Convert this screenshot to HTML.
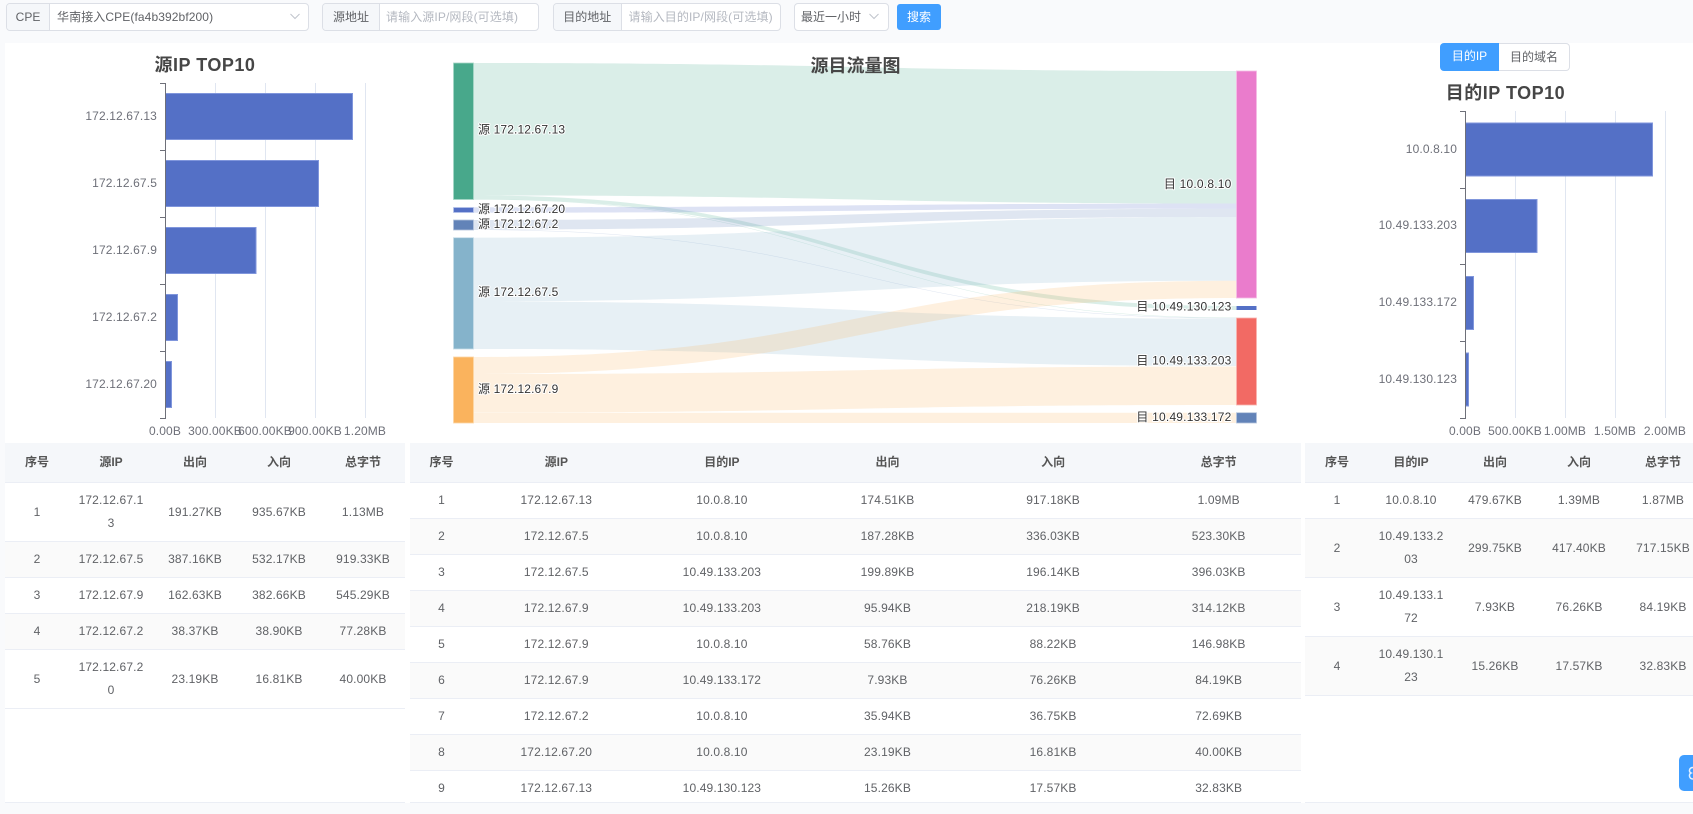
<!DOCTYPE html>
<html lang="zh-CN">
<head>
<meta charset="utf-8">
<title>源目流量</title>
<style>
html,body{margin:0;padding:0;width:1693px;height:814px;overflow:hidden;background:#f9fafc;font-family:"Liberation Sans","Noto Sans CJK SC",sans-serif;font-size:12px;color:#606266}
*{box-sizing:border-box}
.abs{position:absolute}
#panel{left:5px;top:43px;width:1688px;height:760px;background:#fff}
.box{position:absolute;top:3px;height:28px;border:1px solid #dcdfe6;border-radius:4px;background:#fff;line-height:26px;white-space:nowrap;overflow:hidden}
.pre{position:absolute;left:0;top:0;height:26px;background:#f5f7fa;border-right:1px solid #dcdfe6;text-align:center}
.ph{position:absolute;top:0;color:#b4b8c0;letter-spacing:.1px}
.tb{position:absolute;top:443px;height:360px;overflow:hidden;border-bottom:1px solid #ebeef5;background:#fff}
.r{display:flex;height:36px;border-bottom:1px solid #ebeef5;align-items:center;text-align:center;line-height:23px;letter-spacing:.13px}
.r>div{flex:none;width:84px}
.r>div:first-child{width:64px}
.m .r>div{width:165.6px}
.m .r>div:first-child{width:64px}
.h{height:40px;background:#f5f7fa;font-weight:bold;color:#555;letter-spacing:0}
.t{height:59px}
.a{background:#fafafa}
</style>
</head>
<body>
<div class="abs" id="panel"></div>

<div class="box" style="left:6px;width:303px">
  <div class="pre" style="width:43px">CPE</div>
  <div class="ph" style="left:50px;color:#606266">华南接入CPE(fa4b392bf200)</div>
  <svg class="abs" style="left:282px;top:9px" width="12" height="8"><polyline points="1.5,1 6,5.5 10.5,1" fill="none" stroke="#c0c4cc" stroke-width="1"/></svg>
</div>
<div class="box" style="left:322px;width:217px">
  <div class="pre" style="width:57px">源地址</div>
  <div class="ph" style="left:63px">请输入源IP/网段(可选填)</div>
</div>
<div class="box" style="left:552.5px;width:228.5px">
  <div class="pre" style="width:68.5px">目的地址</div>
  <div class="ph" style="left:75px">请输入目的IP/网段(可选填)</div>
</div>
<div class="box" style="left:793.5px;width:95.5px">
  <div class="ph" style="left:6.5px;color:#606266;letter-spacing:0">最近一小时</div>
  <svg class="abs" style="left:73.5px;top:9px" width="12" height="8"><polyline points="1.5,1 6,5.5 10.5,1" fill="none" stroke="#c0c4cc" stroke-width="1"/></svg>
</div>
<div class="abs" style="left:897px;top:4px;width:44px;height:26px;background:#409eff;border-radius:3px;color:#fff;text-align:center;line-height:26px">搜索</div>

<div class="abs" style="left:1440px;top:43px;width:59px;height:28px;background:#409eff;border-radius:4px 0 0 4px;color:#fff;text-align:center;line-height:27px">目的IP</div>
<div class="abs" style="left:1499px;top:43px;width:71px;height:28px;background:#fff;border:1px solid #dcdfe6;border-left:0;border-radius:0 4px 4px 0;text-align:center;line-height:26px">目的域名</div>

<svg class="abs" style="left:0;top:0" width="1693" height="443" viewBox="0 0 1693 443" font-family="'Liberation Sans','Noto Sans CJK SC',sans-serif" font-size="12" letter-spacing=".13">
  <!-- grid -->
  <g stroke="#e0e6f1" stroke-width="1">
    <path d="M215.5 83V418M265.5 83V418M315.5 83V418M365.5 83V418M1515.5 111V418M1565.5 111V418M1615.5 111V418M1665.5 111V418"/>
  </g>
  <g fill="#5470c6" stroke="#8096dc" stroke-width="1">
    <rect x="165.5" y="93.5" width="187" height="46"/>
    <rect x="165.5" y="160.5" width="153" height="46"/>
    <rect x="165.5" y="227.5" width="90.5" height="46"/>
    <rect x="165.5" y="294.5" width="12" height="46"/>
    <rect x="165.5" y="361.5" width="6" height="46"/>
    <rect x="1465.5" y="123" width="187" height="53"/>
    <rect x="1465.5" y="199.5" width="71.5" height="53"/>
    <rect x="1465.5" y="276.5" width="8" height="53"/>
    <rect x="1465.5" y="353" width="3" height="53"/>
  </g>
  <path d="M160 83.5H165.5M160 150.5H165.5M160 217.5H165.5M160 284.5H165.5M160 351.5H165.5M160 418.5H165.5M165.5 83V419M1460 111.5H1465.5M1460 188.5H1465.5M1460 264.5H1465.5M1460 341.5H1465.5M1460 418.5H1465.5M1465.5 111V419" stroke="#6e7079" fill="none"/>
  <g fill="#6e7079" text-anchor="end">
    <text x="157" y="120">172.12.67.13</text>
    <text x="157" y="187">172.12.67.5</text>
    <text x="157" y="254">172.12.67.9</text>
    <text x="157" y="321">172.12.67.2</text>
    <text x="157" y="388">172.12.67.20</text>
    <text x="1457" y="153">10.0.8.10</text>
    <text x="1457" y="229">10.49.133.203</text>
    <text x="1457" y="306">10.49.133.172</text>
    <text x="1457" y="383">10.49.130.123</text>
  </g>
  <g fill="#6e7079" text-anchor="middle">
    <text x="165" y="435">0.00B</text>
    <text x="215" y="435">300.00KB</text>
    <text x="265" y="435">600.00KB</text>
    <text x="315" y="435">900.00KB</text>
    <text x="365" y="435">1.20MB</text>
    <text x="1465" y="435">0.00B</text>
    <text x="1515" y="435">500.00KB</text>
    <text x="1565" y="435">1.00MB</text>
    <text x="1615" y="435">1.50MB</text>
    <text x="1665" y="435">2.00MB</text>
  </g>
  <g font-size="18" font-weight="bold" fill="#464646" text-anchor="middle" letter-spacing=".5">
    <text x="205" y="71">源IP TOP10</text>
    <text x="1505.5" y="99">目的IP TOP10</text>
  </g>

  <!-- sankey links -->
  <g fill-opacity=".2">
    <path fill="#48a88b" d="M473.7 63C855 63 855 71 1236.3 71L1236.3 203.5C855 203.5 855 195.5 473.7 195.5Z"/>
    <path fill="#48a88b" d="M473.7 195.5C855 195.5 855 306 1236.3 306L1236.3 310C855 310 855 199.2 473.7 199.2Z"/>
    <path fill="#48a88b" d="M473.7 199C855 199 855 317.5 1236.3 317.5L1236.3 318C855 318 855 199.5 473.7 199.5Z"/>
    <path fill="#5470c6" d="M473.7 207.3C855 207.3 855 203.5 1236.3 203.5L1236.3 208.7C855 208.7 855 212.7 473.7 212.7Z"/>
    <path fill="#6080b8" d="M473.7 220C855 220 855 208.7 1236.3 208.7L1236.3 217C855 217 855 229.5 473.7 229.5Z"/>
    <path fill="#6080b8" d="M473.7 229.5C855 229.5 855 318 1236.3 318L1236.3 318.5C855 318.5 855 230 473.7 230Z"/>
    <path fill="#85b3cb" d="M473.7 237.7C855 237.7 855 217 1236.3 217L1236.3 280.7C855 280.7 855 301.4 473.7 301.4Z"/>
    <path fill="#85b3cb" d="M473.7 301.4C855 301.4 855 318.7 1236.3 318.7L1236.3 366C855 366 855 349 473.7 349Z"/>
    <path fill="#fab35d" d="M473.7 357C855 357 855 280.7 1236.3 280.7L1236.3 298C855 298 855 374 473.7 374Z"/>
    <path fill="#fab35d" d="M473.7 374C855 374 855 366.5 1236.3 366.5L1236.3 405C855 405 855 412.5 473.7 412.5Z"/>
    <path fill="#fab35d" d="M473.7 412.7C855 412.7 855 412.7 1236.3 412.7L1236.3 423C855 423 855 423 473.7 423Z"/>
  </g>
  <!-- sankey nodes -->
  <g>
    <rect x="453.5" y="63" width="20" height="136.5" fill="#48a88b" stroke="#a6d6c6" stroke-width=".8"/>
    <rect x="453.5" y="207.5" width="20" height="5" fill="#5470c6" stroke="#b4c2ea" stroke-width=".8"/>
    <rect x="453.5" y="220" width="20" height="10" fill="#6283b8" stroke="#b4c4dc" stroke-width=".8"/>
    <rect x="453.5" y="237.7" width="20" height="111.3" fill="#85b3cb" stroke="#c6dce8" stroke-width=".8"/>
    <rect x="453.5" y="357" width="20" height="66" fill="#fab35d" stroke="#fcd6a6" stroke-width=".8"/>
    <rect x="1236.5" y="71" width="20" height="227" fill="#ea7ccc" stroke="#f4bce4" stroke-width=".8"/>
    <rect x="1236.5" y="306" width="20" height="4" fill="#5470c6"/>
    <rect x="1236.5" y="318" width="20" height="87" fill="#f26a64" stroke="#f8b4b0" stroke-width=".8"/>
    <rect x="1236.5" y="412.7" width="20" height="10.3" fill="#6283b8" stroke="#b4c4dc" stroke-width=".8"/>
  </g>
  <!-- sankey labels -->
  <g fill="#333" stroke="#fff" stroke-width="2" paint-order="stroke" stroke-linejoin="round">
    <text x="478" y="133.5">源 172.12.67.13</text>
    <text x="478" y="213">源 172.12.67.20</text>
    <text x="478" y="228">源 172.12.67.2</text>
    <text x="478" y="296">源 172.12.67.5</text>
    <text x="478" y="393">源 172.12.67.9</text>
    <g text-anchor="end" letter-spacing=".2">
      <text x="1231.5" y="188">目 10.0.8.10</text>
      <text x="1231.5" y="310.5">目 10.49.130.123</text>
      <text x="1231.5" y="364.5">目 10.49.133.203</text>
      <text x="1231.5" y="421">目 10.49.133.172</text>
    </g>
  </g>
  <text x="855.5" y="72" font-size="18" font-weight="bold" fill="#464646" text-anchor="middle" letter-spacing="0">源目流量图</text>
</svg>

<!-- left table -->
<div class="tb" style="left:5px;width:400px">
  <div class="r h"><div>序号</div><div>源IP</div><div>出向</div><div>入向</div><div>总字节</div></div>
  <div class="r t"><div>1</div><div>172.12.67.1<br>3</div><div>191.27KB</div><div>935.67KB</div><div>1.13MB</div></div>
  <div class="r a"><div>2</div><div>172.12.67.5</div><div>387.16KB</div><div>532.17KB</div><div>919.33KB</div></div>
  <div class="r"><div>3</div><div>172.12.67.9</div><div>162.63KB</div><div>382.66KB</div><div>545.29KB</div></div>
  <div class="r a"><div>4</div><div>172.12.67.2</div><div>38.37KB</div><div>38.90KB</div><div>77.28KB</div></div>
  <div class="r t"><div>5</div><div>172.12.67.2<br>0</div><div>23.19KB</div><div>16.81KB</div><div>40.00KB</div></div>
</div>

<!-- middle table -->
<div class="tb m" style="left:409.5px;width:891.5px">
  <div class="r h"><div>序号</div><div>源IP</div><div>目的IP</div><div>出向</div><div>入向</div><div>总字节</div></div>
  <div class="r"><div>1</div><div>172.12.67.13</div><div>10.0.8.10</div><div>174.51KB</div><div>917.18KB</div><div>1.09MB</div></div>
  <div class="r a"><div>2</div><div>172.12.67.5</div><div>10.0.8.10</div><div>187.28KB</div><div>336.03KB</div><div>523.30KB</div></div>
  <div class="r"><div>3</div><div>172.12.67.5</div><div>10.49.133.203</div><div>199.89KB</div><div>196.14KB</div><div>396.03KB</div></div>
  <div class="r a"><div>4</div><div>172.12.67.9</div><div>10.49.133.203</div><div>95.94KB</div><div>218.19KB</div><div>314.12KB</div></div>
  <div class="r"><div>5</div><div>172.12.67.9</div><div>10.0.8.10</div><div>58.76KB</div><div>88.22KB</div><div>146.98KB</div></div>
  <div class="r a"><div>6</div><div>172.12.67.9</div><div>10.49.133.172</div><div>7.93KB</div><div>76.26KB</div><div>84.19KB</div></div>
  <div class="r"><div>7</div><div>172.12.67.2</div><div>10.0.8.10</div><div>35.94KB</div><div>36.75KB</div><div>72.69KB</div></div>
  <div class="r a"><div>8</div><div>172.12.67.20</div><div>10.0.8.10</div><div>23.19KB</div><div>16.81KB</div><div>40.00KB</div></div>
  <div class="r"><div>9</div><div>172.12.67.13</div><div>10.49.130.123</div><div>15.26KB</div><div>17.57KB</div><div>32.83KB</div></div>
</div>

<!-- right table -->
<div class="tb" style="left:1305px;width:388px">
  <div style="width:400px">
  <div class="r h"><div>序号</div><div>目的IP</div><div>出向</div><div>入向</div><div>总字节</div></div>
  <div class="r"><div>1</div><div>10.0.8.10</div><div>479.67KB</div><div>1.39MB</div><div>1.87MB</div></div>
  <div class="r t a"><div>2</div><div>10.49.133.2<br>03</div><div>299.75KB</div><div>417.40KB</div><div>717.15KB</div></div>
  <div class="r t"><div>3</div><div>10.49.133.1<br>72</div><div>7.93KB</div><div>76.26KB</div><div>84.19KB</div></div>
  <div class="r t a"><div>4</div><div>10.49.130.1<br>23</div><div>15.26KB</div><div>17.57KB</div><div>32.83KB</div></div>
  </div>
</div>

<!-- floating button -->
<div class="abs" style="left:1679px;top:755px;width:14px;height:36px;background:#409eff;border-radius:5px 0 0 5px;overflow:hidden">
  <svg class="abs" style="left:0;top:0" width="14" height="36"><path d="M14 12.5C10 12.5 9.5 17 12 18C9.5 19 10 24 14 24" fill="none" stroke="#e6f1ff" stroke-width="1.5"/></svg>
</div>
</body>
</html>
